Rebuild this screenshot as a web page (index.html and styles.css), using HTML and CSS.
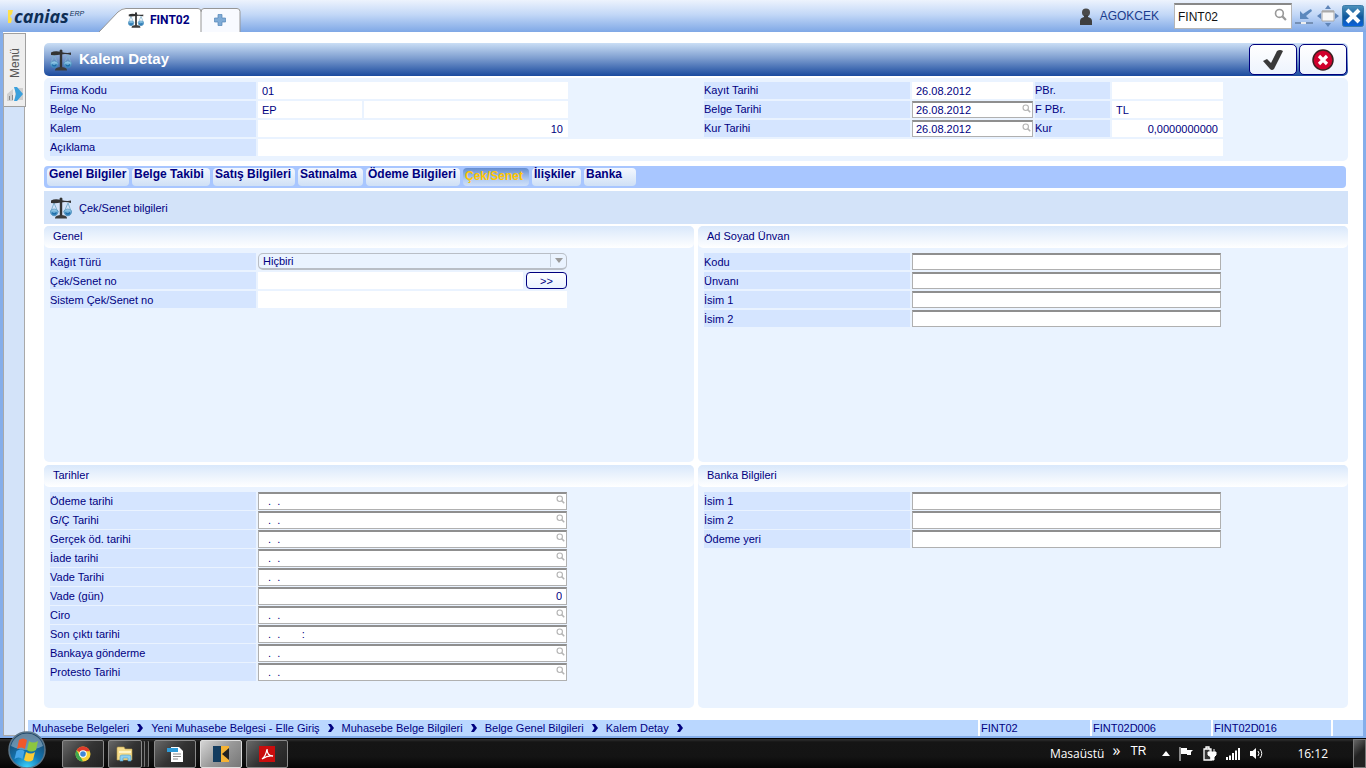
FILE: index.html
```html
<!DOCTYPE html>
<html lang="tr">
<head>
<meta charset="utf-8">
<title>Kalem Detay</title>
<link rel="stylesheet" href="styles.css">
</head>
<body>
<svg width="0" height="0" class="defs" aria-hidden="true">
  <defs>
    <linearGradient id="pan" x1="0" y1="0" x2="0" y2="1"><stop offset="0" stop-color="#a9d8f0"/><stop offset="1" stop-color="#2277b5"/></linearGradient>
    <linearGradient id="closebg" x1="0" y1="0" x2="0" y2="1"><stop offset="0" stop-color="#4d93bd"/><stop offset=".55" stop-color="#10589c"/><stop offset="1" stop-color="#0a63e0"/></linearGradient>
    <radialGradient id="orb" cx=".5" cy="1" r=".9"><stop offset="0" stop-color="#3fd8ff"/><stop offset=".45" stop-color="#1277b4"/><stop offset="1" stop-color="#1b4568"/></radialGradient>
    <symbol id="scales" viewBox="0 0 22 22">
      <path d="M4 6 .800 14.500M4 6l3.700 8.500M18 6l-3.700 8.500M18 6l3.200 8.500" stroke="#7fb0cf" fill="none"/>
      <path d="M9.800 2.500h2.400V19H9.800z" fill="#333"/><circle cx="11" cy="2" r="1.500" fill="#333"/>
      <path d="M1 3.500Q5 1.500 11 3t10 .5V6Q16 4.500 11 5.500T1 6z" fill="#333"/>
      <path d="M5 20.500q1-2.500 6-2.500t6 2.500v1H5z" fill="#3d3d3d"/>
      <path d="M.200 14q4-4 8 0a4 4.800 0 0 1-8 0zM13.800 14q4-4 8 0a4 4.800 0 0 1-8 0z" fill="url(#pan)" stroke="#4b8cb8" stroke-width=".7"/>
      <path d="M2 15.500q2 2.800 4.500 0M15.500 15.500q2 2.800 4.500 0" fill="none" stroke="#1c6aa6" stroke-width="1.200"/>
    </symbol>
    <symbol id="lens" viewBox="0 0 12 12"><circle cx="5" cy="5" r="3.600" fill="none" stroke="currentColor" stroke-width="1.500"/><path d="m7.500 7.500 3.500 3.500" stroke="currentColor" stroke-width="2"/></symbol>
    <symbol id="chev" viewBox="0 0 8 8"><path d="M1 0h3l3 4-3 4H1l2.500-4z" fill="#00007f"/></symbol>
  </defs>
</svg>

<div class="app">
  <header class="topbar">
    <div class="logo"><svg width="6" height="13" viewBox="0 0 6 13"><path d="M0 0h5L4 4l-2 2 2 3-1 4H0z" fill="#ffe04a"/></svg><span class="logo-name">canias</span><span class="logo-erp">ERP</span></div>
    <nav class="doc-tabs">
      <svg class="tab-shape" viewBox="0 0 144 24" aria-hidden="true"><path d="M0 24 19 4Q23 0 27 0h72q3 0 3 3V24z" fill="#fff"/><path d="M102 24V3q0-3 3-3h33q3 0 3 3v21z" fill="#f8faff"/><path d="M0 24 19 4Q23 .500 27 .500h72q3 0 3 3V24M102 4q0-3.500 3-3.500h33q3 0 3 3V24" fill="none" stroke="#969696"/></svg>
      <a class="doc-tab" href="#"><svg width="16" height="16"><use href="#scales"/></svg>FINT02</a>
      <button class="new-tab" aria-label="Yeni sekme"><svg width="12" height="12" viewBox="0 0 12 12"><path d="M4 .500h4V4h3.500v4H8v3.500H4V8H.500V4H4z" fill="#7fabd6" stroke="#5585b8" stroke-width=".7"/></svg></button>
    </nav>
    <div class="user"><svg width="14" height="17" viewBox="0 0 14 17"><circle cx="7" cy="4.500" r="4" fill="#4a4a4a"/><path d="M1 17v-4q0-3 4-4V7h4v2q4 1 4 4v4z" fill="#3f3f3f"/></svg>AGOKCEK</div>
    <div class="search"><input aria-label="İşlem kodu" value="FINT02"><svg width="13" height="13"><use href="#lens"/></svg></div>
    <div class="win">
      <button aria-label="Küçült"><svg width="20" height="20" viewBox="0 0 20 20"><path d="M1 16h18v2H1z" fill="#7590b5"/><path d="M7 16h5v2H7z" fill="#eee"/><path d="M6 5v8h9l-3-3 6-5-1-2-2 1-6 4z" fill="#5b88bd"/></svg></button>
      <button aria-label="Ekranı kapla"><svg width="22" height="22" viewBox="0 0 22 22"><path d="m11 0 3 4H8zM11 22l3-4H8zM0 11l4-3v6zM22 11l-4-3v6z" fill="#5f85b8"/><path d="M5 6h12v10H5z" fill="#f7f7f7" stroke="#a9a9a9"/><path d="M5 5.500h12v2H5z" fill="#aaa"/></svg></button>
      <button aria-label="Kapat"><svg width="22" height="22" viewBox="0 0 22 22"><rect x=".5" y=".5" width="21" height="21" rx="2" fill="url(#closebg)" stroke="#3c7ba8"/><path d="m5 5 12 12M17 5 5 17" stroke="#fff" stroke-width="4"/></svg></button>
    </div>
  </header>

  <div class="body">
    <aside class="side">
      <button class="menu-btn"><span>Menü</span><svg width="18" height="16" viewBox="0 0 18 16"><path d="M1 8 7 3v12H1zM9 2h8v12H9z" fill="#cfcfcf"/><path d="M3 10h1v4H3zM6 9h1v5H6z" fill="#888"/><path d="M8 1h3l6 7-6 7H8l2-7z" fill="#3aa0dc"/></svg></button>
    </aside>

    <main class="main">
      <div class="titlebar">
        <svg width="22" height="24"><use href="#scales"/></svg><h1>Kalem Detay</h1>
        <button aria-label="Onayla"><svg width="22" height="22" viewBox="0 0 22 22"><path d="m1 12 4-2 4 4 6-12q3-2 6 0l-9 18q-2 2-4 0z" fill="#3a3a3a"/></svg></button>
        <button aria-label="İptal"><svg width="22" height="22" viewBox="0 0 22 22"><circle cx="11" cy="11" r="10" fill="#d0002c" stroke="#3a2020" stroke-width="1.500"/><path d="m7 7 8 8M15 7l-8 8" stroke="#fff" stroke-width="3.200"/></svg></button>
      </div>

      <form class="head-form">
        <label for="h1">Firma Kodu</label><input id="h1" class="ro" readonly value="01">
        <label for="h2" class="col4">Kayıt Tarihi</label><input id="h2" class="ro" readonly value="26.08.2012">
        <label for="h3">PBr.</label><input id="h3" class="ro" readonly>
        <label for="h4">Belge No</label><div class="pair"><input id="h4" class="ro" readonly value="EP"><input class="ro" aria-label="Belge No 2" readonly></div>
        <label for="h5" class="col4">Belge Tarihi</label><div class="look"><input id="h5" value="26.08.2012"><svg width="9" height="9"><use href="#lens"/></svg></div>
        <label for="h6">F PBr.</label><input id="h6" class="ro" readonly value="TL">
        <label for="h7">Kalem</label><input id="h7" class="ro num" readonly value="10">
        <label for="h8" class="col4">Kur Tarihi</label><div class="look"><input id="h8" value="26.08.2012"><svg width="9" height="9"><use href="#lens"/></svg></div>
        <label for="h9">Kur</label><input id="h9" class="ro num" readonly value="0,0000000000">
        <label for="h10">Açıklama</label><input id="h10" class="ro wide" readonly>
      </form>

      <nav class="tabs">
        <button>Genel Bilgiler</button><button>Belge Takibi</button><button>Satış Bilgileri</button><button>Satınalma</button><button>Ödeme Bilgileri</button><button class="on">Çek/Senet</button><button>İlişkiler</button><button>Banka</button>
      </nav>

      <div class="subtitle"><svg width="22" height="24"><use href="#scales"/></svg>Çek/Senet bilgileri</div>

      <div class="panels">
        <section class="panel"><h2>Genel</h2>
          <div class="rows loose">
            <label for="g1">Kağıt Türü</label><div class="combo"><select id="g1"><option>Hiçbiri</option></select><svg width="16" height="13" viewBox="0 0 16 13"><path d="M.500 0v13" stroke="#c5cfdb"/><path d="M5 4h8l-4 5z" fill="#9b9b9b"/></svg></div>
            <label for="g2">Çek/Senet no</label><div class="withbtn"><input id="g2" class="ro" readonly><button type="button">&gt;&gt;</button></div>
            <label for="g3">Sistem Çek/Senet no</label><input id="g3" class="ro" readonly>
          </div>
        </section>
        <section class="panel"><h2>Ad Soyad Ünvan</h2>
          <div class="rows loose">
            <label for="a1">Kodu</label><input id="a1">
            <label for="a2">Ünvanı</label><input id="a2">
            <label for="a3">İsim 1</label><input id="a3">
            <label for="a4">İsim 2</label><input id="a4">
          </div>
        </section>
        <section class="panel"><h2>Tarihler</h2>
          <div class="rows">
            <label for="t1">Ödeme tarihi</label><div class="look"><input id="t1" value="  .  ."><svg width="9" height="9"><use href="#lens"/></svg></div>
            <label for="t2">G/Ç Tarihi</label><div class="look"><input id="t2" value="  .  ."><svg width="9" height="9"><use href="#lens"/></svg></div>
            <label for="t3">Gerçek öd. tarihi</label><div class="look"><input id="t3" value="  .  ."><svg width="9" height="9"><use href="#lens"/></svg></div>
            <label for="t4">İade tarihi</label><div class="look"><input id="t4" value="  .  ."><svg width="9" height="9"><use href="#lens"/></svg></div>
            <label for="t5">Vade Tarihi</label><div class="look"><input id="t5" value="  .  ."><svg width="9" height="9"><use href="#lens"/></svg></div>
            <label for="t6">Vade (gün)</label><input id="t6" class="num" value="0">
            <label for="t7">Ciro</label><div class="look"><input id="t7" value="  .  ."><svg width="9" height="9"><use href="#lens"/></svg></div>
            <label for="t8">Son çıktı tarihi</label><div class="look"><input id="t8" value="  .  .       :"><svg width="9" height="9"><use href="#lens"/></svg></div>
            <label for="t9">Bankaya gönderme</label><div class="look"><input id="t9" value="  .  ."><svg width="9" height="9"><use href="#lens"/></svg></div>
            <label for="t10">Protesto Tarihi</label><div class="look"><input id="t10" value="  .  ."><svg width="9" height="9"><use href="#lens"/></svg></div>
          </div>
        </section>
        <section class="panel"><h2>Banka Bilgileri</h2>
          <div class="rows">
            <label for="b1">İsim 1</label><input id="b1">
            <label for="b2">İsim 2</label><input id="b2">
            <label for="b3">Ödeme yeri</label><input id="b3">
          </div>
        </section>
      </div>
    </main>

    <footer class="status">
      <nav class="crumbs">
        <a href="#">Muhasebe Belgeleri</a><svg width="8" height="8"><use href="#chev"/></svg>
        <a href="#">Yeni Muhasebe Belgesi - Elle Giriş</a><svg width="8" height="8"><use href="#chev"/></svg>
        <a href="#">Muhasebe Belge Bilgileri</a><svg width="8" height="8"><use href="#chev"/></svg>
        <a href="#">Belge Genel Bilgileri</a><svg width="8" height="8"><use href="#chev"/></svg>
        <a href="#">Kalem Detay</a><svg width="8" height="8"><use href="#chev"/></svg>
      </nav>
      <span>FINT02</span><span>FINT02D006</span><span>FINT02D016</span><span></span>
    </footer>
  </div>
</div>

<div class="taskbar">
  <button class="start" aria-label="Başlat"><svg width="38" height="38" viewBox="0 0 38 38"><circle cx="19" cy="19" r="18" fill="url(#orb)" stroke="#5d7689" stroke-width="1.500"/><path d="M3 15a16.500 16.500 0 0 1 32 0q-16 8-32 0z" fill="#c3d6e4" opacity=".45"/><path d="M11 9q4-3 8 0l-2 9q-4-3-8 0z" fill="#f0592b"/><path d="M21 10q4 3 9 0l-2 9q-5 3-9 0z" fill="#8cc63f"/><path d="M8.500 20q4-3 8 0l-2 8q-4-3-8 0z" fill="#45a5e8"/><path d="M18 21q5 3 9 0l-2 8q-4 3-9 0z" fill="#fccb35"/></svg></button>
  <button class="task" aria-label="Chrome"><svg width="16" height="16" viewBox="0 0 16 16"><circle cx="8" cy="8" r="7.500" fill="#f7d038"/><path d="M8 8 1.500 4.300A7.500 7.500 0 0 1 15 5.200H8z" fill="#de3c2c"/><path d="M1.500 4.300 5.500 11 8 15.500A7.500 7.500 0 0 1 1.500 4.300z" fill="#3fa650"/><circle cx="8" cy="8" r="3.800" fill="#fff"/><circle cx="8" cy="8" r="2.800" fill="#3f86d8"/></svg></button>
  <button class="task stack" aria-label="Gezgin"><svg width="18" height="16" viewBox="0 0 18 16"><path d="M1 2q0-1 1-1h6l1 2h7v11H1z" fill="#f5dc8c" stroke="#b99a47" stroke-width=".6"/><path d="M3 5h12v2H3z" fill="#fff4c5"/><path d="M4 15v-4q0-2 2-2h7q2 0 2 2v4h-3v-3H7v3z" fill="#8fd0f0" stroke="#4b9bc8" stroke-width=".6"/></svg></button>
  <button class="task" aria-label="Belge"><svg width="16" height="16" viewBox="0 0 16 16"><path d="M4 1h8l4 4v11H4z" fill="#fff"/><path d="M0 2h11v4H0z" fill="#2e9bd8"/><path d="M6 8h8M6 10.500h8M6 13h5" stroke="#888"/></svg></button>
  <button class="task active" aria-label="Canias"><svg width="16" height="16" viewBox="0 0 16 16"><path d="M0 0h8v16H0z" fill="#133c5f"/><path d="M8 0h8v16H8z" fill="#f5b335"/><path d="M16 2v12L9 8z" fill="#222"/></svg></button>
  <button class="task" aria-label="Acrobat"><svg width="16" height="16" viewBox="0 0 16 16"><path d="M0 0h16v16H0z" fill="#c90d0d"/><path d="M3 13q4-3 5-10c0 5 2 7 6 7q-5-1-11 3z" fill="none" stroke="#fff" stroke-width="1.300"/></svg></button>
  <div class="tray">
    <span class="desk">Masaüstü</span><span class="more">»</span><span class="lang">TR</span>
    <svg class="ic" width="8" height="5" viewBox="0 0 8 5"><path d="m4 0 4 5H0z" fill="#fff"/></svg>
    <svg class="ic" width="15" height="14" viewBox="0 0 15 14"><path d="M1 0v14" stroke="#fff"/><path d="M2 1h6v6H2zM8 3h6l-2 2v3H8z" fill="#fff"/></svg>
    <svg class="ic" width="14" height="15" viewBox="0 0 14 15"><path d="M1 3h7v11H1zM3 1h3v2H3z" fill="#333" stroke="#fff" stroke-width="1.300"/><path d="M5 6h8v3l-2 2v3H8v-3L5 9zM7 3v3M11 3v3" fill="#fff" stroke="#fff"/></svg>
    <svg class="ic" width="15" height="12" viewBox="0 0 15 12"><path d="M0 9h2v3H0zM3 7.500h2V12H3zM6 5h2v7H6zM9 2.500h2V12H9zM12 0h2v12h-2z" fill="#fff"/></svg>
    <svg class="ic" width="14" height="13" viewBox="0 0 14 13"><path d="M0 4h2.500L6 1v11L2.500 9H0z" fill="#fff"/><path d="M8 4q2 2.500 0 5M10 2q3.500 4.500 0 9" fill="none" stroke="#fff"/></svg>
    <time>16:12</time><button class="show" aria-label="Masaüstünü göster"></button>
  </div>
</div>
</body>
</html>
```

FILE: styles.css
```css
* { box-sizing: border-box; }
body {
  margin: 0;
  min-height: 100vh;
  display: flex;
  flex-direction: column;
  background: #fff;
  color: #00007f;
  font: 11px/12px "Liberation Sans", Arial, sans-serif;
}
.defs { position: absolute; }
svg { flex: none; display: block; }
input, button, select { font: inherit; color: inherit; margin: 0; border-radius: 0; }
button { padding: 0; border: 0; background: none; display: grid; place-items: center; }
a { color: inherit; text-decoration: none; }

.app { flex: 1; display: flex; flex-direction: column; }

/* Top bar */
.topbar {
  height: 32px;
  display: flex;
  align-items: center;
  background: linear-gradient(#edf3fd, #c3d8f7 45%, #7fa8e6);
}
.logo { width: 99px; padding-left: 8px; display: flex; align-items: center; color: #0e2e55; }
.logo-name { font: italic bold 18px/24px "Open Sans", sans-serif; }
.logo-erp { padding: 0 0 4px 1px; font: italic 7px/8px "Liberation Sans", sans-serif; }
.doc-tabs { position: relative; align-self: flex-end; width: 144px; height: 24px; display: flex; align-items: center; }
.tab-shape { position: absolute; inset: 0; width: 144px; height: 24px; }
.doc-tab, .new-tab { position: relative; }
.doc-tab { width: 102px; padding-left: 29px; display: flex; align-items: center; gap: 6px; font: bold 12px/16px Roboto, sans-serif; }
.new-tab { width: 38px; height: 24px; }
.user { margin-left: auto; display: flex; align-items: center; gap: 7px; color: #1b3c8c; font-size: 12px; }
.search {
  width: 118px; height: 26px;
  margin: 0 2px 0 15px;
  padding: 0 4px 0 3px;
  display: flex;
  border: 1px solid #b5b5b5;
  border-top: 2px solid #888;
  background: #fff;
  color: #999;
}
.search input { flex: 1; min-width: 0; border: 0; padding: 0; background: none; color: #111; font-size: 12px; }
.search svg { margin-top: 3px; }
.win { display: flex; align-items: center; gap: 3px; padding-right: 2px; }

/* Work area */
.body {
  flex: 1;
  display: grid;
  grid-template-columns: 25px 1fr;
  grid-template-rows: 1fr 16px;
  border: solid #85aeea;
  border-width: 0 3px 2px;
}
.side { grid-row: 1 / 3; border: 1px solid #a9a9a9; border-top: 0; margin: 1px 3px 0 0; background: #d3e3f9; }
.menu-btn { width: 22px; height: 74px; border: 1px solid #a0a0a0; border-left: 0; background: #eee; padding: 14px 0 4px; display: flex; flex-direction: column; align-items: center; justify-content: space-between; }
.menu-btn span { writing-mode: vertical-rl; transform: rotate(180deg); color: #555; font-size: 12px; }
.main { padding: 11px 15px 12px 16px; display: flex; flex-direction: column; }

.titlebar {
  height: 33px;
  padding: 0 1px 0 6px;
  display: flex;
  align-items: center;
  gap: 2px;
  border-radius: 5px;
  background: linear-gradient(#cadef5, #7f9fd0 45%, #1a4a9e);
}
.titlebar h1 { margin: 0 auto 2px 5px; color: #fff; font-size: 15px; line-height: 18px; }
.titlebar button { width: 48px; height: 31px; border: 1px solid #00007f; border-radius: 5px; background: linear-gradient(#fff, #edf3fd); }

.head-form, .rows { display: grid; }
.head-form {
  margin-top: 2px;
  padding: 4px 125px 5px 6px;
  grid-template-columns: 206px 310px 1fr 206px 121px 75px 111px;
  grid-auto-rows: 17px;
  gap: 2px;
  border-radius: 5px;
  background: #eaf3ff;
}
.head-form .col4 { grid-column: 4; }
.head-form .wide { grid-column: 2 / -1; }
.pair { display: grid; grid-template-columns: 104px 1fr; gap: 2px; }
label { background: #d5e5ff; line-height: 17px; white-space: nowrap; }
.head-form input, .rows input {
  width: 100%; height: 100%; min-width: 0;
  padding: 0 4px 1px 3px;
  border: 1px solid #b0b0b0;
  border-top: 2px solid #8f8f8f;
  background: #fff;
  white-space: pre;
  outline: 0;
}
.head-form .ro, .rows .ro { border: 0; padding: 0 5px 0 4px; }
.head-form .num, .rows .num { text-align: right; }
.look { position: relative; }
.look svg { position: absolute; right: 2px; top: 3px; color: #b5b5b5; }

/* Section tabs */
.tabs {
  margin: 5px 2px 0 0;
  padding: 2px 3px;
  height: 22px;
  display: grid;
  grid-template-columns: 82px 78px 82px 65px 94px 66px 49px 52px;
  gap: 3px;
  border-radius: 4px;
  background: #a8c6ff;
}
.tabs button {
  padding: 0 0 6px 2px;
  justify-items: start;
  border-radius: 4px;
  background: linear-gradient(#f4f8ff, #cfe0f6);
  font-weight: bold;
  font-size: 12px;
  line-height: 12px;
  white-space: nowrap;
}
.tabs .on { padding: 0 0 2px 2px; color: #ffc600; background: linear-gradient(#648dd0, #b8d0f3 70%, #d0e0f8); }

.subtitle { margin-top: 3px; height: 33px; padding-left: 6px; display: flex; align-items: center; gap: 7px; background: #d3e3f9; }

/* Panels */
.panels { flex: 1; margin-top: 2px; display: grid; grid-template-columns: 1fr 1fr; grid-template-rows: 236fr 243fr; gap: 3px 4px; }
.panel { border-radius: 5px; background: #eaf3ff; }
.panel h2 { margin: 0; height: 22px; padding-left: 9px; border-radius: 5px; background: linear-gradient(#d9e8fb, #fff); font: 11px/21px "Liberation Sans", sans-serif; }
.rows { padding: 5px 6px; grid-template-columns: 206px 309px; grid-auto-rows: 18px; column-gap: 2px; row-gap: 1px; }
.rows label { line-height: 18px; }
.rows.loose { grid-auto-rows: 17px; row-gap: 2px; }
.combo { position: relative; }
.combo select { width: 100%; height: 17px; appearance: none; border: 1px solid #b9bec6; border-bottom-width: 2px; border-radius: 5px; padding: 0 4px; background: #eaf3ff; }
.combo svg { position: absolute; right: 1px; top: 1px; pointer-events: none; }
.withbtn { display: grid; grid-template-columns: 1fr 41px; gap: 3px; }
.withbtn button { border: 1px solid #00007f; border-radius: 4px; background: linear-gradient(#fff, #eaf3ff); }

/* Status bar */
.status { display: grid; grid-template-columns: 1fr 110px 119px 118px 30px; gap: 2px; line-height: 16px; }
.status > * { background: #bad7ff; }
.status > span { padding-left: 1px; }
.status > .crumbs { display: flex; align-items: center; gap: 7px; padding-left: 4px; white-space: nowrap; }

/* Taskbar */
.taskbar {
  height: 30px;
  display: flex;
  align-items: center;
  background: linear-gradient(#333, #151515 3px, #141414 60%, #050505);
  color: #fff;
  border-top: 1px solid #000;
}
.start { width: 38px; height: 38px; margin: -8px 16px 0 8px; position: relative; }
.task { width: 42px; height: 28px; margin-right: 4px; border: 1px solid #8a8a8a; border-radius: 2px; background: linear-gradient(135deg, #686868, #333 50%, #222); }
.task.stack { width: 34px; margin-right: 12px; box-shadow: 3px 0 0 -1px #222, 4px 0 0 -1px #777, 7px 0 0 -1px #222, 8px 0 0 -1px #777; }
.task.active { background: linear-gradient(135deg, #d5d5d5, #999 50%, #777); border-color: #ddd; }
.tray { margin-left: auto; align-self: stretch; display: flex; align-items: center; font: 12px/16px "Open Sans", sans-serif; }
.desk { margin-right: 8px; }
.more { margin: 0 10px 8px 0; font-size: 16px; }
.lang { margin: 0 16px 6px 0; font: 12px/14px "Liberation Sans", sans-serif; }
.ic { margin-right: 9px; }
.tray time { margin: 0 25px 0 24px; }
.show { align-self: stretch; width: 13px; border: 1px solid #777; background: linear-gradient(135deg, #666, #222 50%); }
```
